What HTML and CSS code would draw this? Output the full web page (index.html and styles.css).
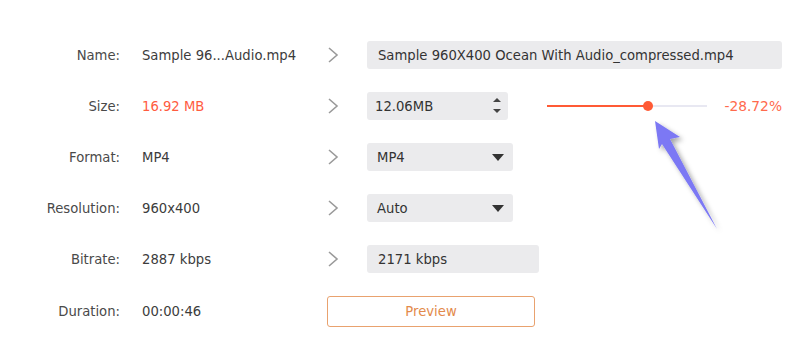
FILE: index.html
```html
<!DOCTYPE html>
<html>
<head>
<meta charset="utf-8">
<link rel="stylesheet" href="styles.css">
</head>
<body>
<div class="panel">
  <div class="label">Name:</div>
  <div class="value">Sample 96...Audio.mp4</div>
  <div class="chev"><svg width="12" height="18" viewBox="0 0 12 18"><polyline points="2,2 10,9 2,16" fill="none" stroke="#9a9a9a" stroke-width="1.6"/></svg></div>
  <div class="field wide">Sample 960X400 Ocean With Audio_compressed.mp4</div>

  <div class="label">Size:</div>
  <div class="value red">16.92 MB</div>
  <div class="chev"><svg width="12" height="18" viewBox="0 0 12 18"><polyline points="2,2 10,9 2,16" fill="none" stroke="#9a9a9a" stroke-width="1.6"/></svg></div>
  <div class="sizecell">
    <div class="field size">12.06MB
      <svg class="spin" width="10" height="20" viewBox="0 0 10 20"><polygon points="1,6 9,6 5,2" fill="#444"/><polygon points="1,13 9,13 5,17" fill="#444"/></svg>
    </div>
    <div class="slider">
      <div class="fill"></div>
      <div class="knob"></div>
    </div>
    <div class="pct">-28.72%</div>
  </div>

  <div class="label">Format:</div>
  <div class="value">MP4</div>
  <div class="chev"><svg width="12" height="18" viewBox="0 0 12 18"><polyline points="2,2 10,9 2,16" fill="none" stroke="#9a9a9a" stroke-width="1.6"/></svg></div>
  <div class="field select">MP4<svg width="12" height="8" viewBox="0 0 12 8"><polygon points="0,1 12,1 6,8" fill="#333"/></svg></div>

  <div class="label">Resolution:</div>
  <div class="value">960x400</div>
  <div class="chev"><svg width="12" height="18" viewBox="0 0 12 18"><polyline points="2,2 10,9 2,16" fill="none" stroke="#9a9a9a" stroke-width="1.6"/></svg></div>
  <div class="field select">Auto<svg width="12" height="8" viewBox="0 0 12 8"><polygon points="0,1 12,1 6,8" fill="#333"/></svg></div>

  <div class="label">Bitrate:</div>
  <div class="value">2887 kbps</div>
  <div class="chev"><svg width="12" height="18" viewBox="0 0 12 18"><polyline points="2,2 10,9 2,16" fill="none" stroke="#9a9a9a" stroke-width="1.6"/></svg></div>
  <div class="field bitrate">2171 kbps</div>

  <div class="label">Duration:</div>
  <div class="value">00:00:46</div>
  <div class="preview">Preview</div>
</div>
<svg class="pointer" width="90" height="130" viewBox="640 110 90 130">
  <defs>
    <filter id="sh" x="-50%" y="-50%" width="200%" height="200%">
      <feDropShadow dx="3" dy="3" stdDeviation="2.5" flood-color="#000" flood-opacity="0.35"/>
    </filter>
  </defs>
  <polygon points="655,121 680,137 670,139 717,229 662,144 659,149" fill="#7b78f4" filter="url(#sh)"/>
</svg>
</body>
</html>
```
FILE: styles.css
```css
html, body {
  margin: 0;
  padding: 0;
  background: #fff;
}
body {
  width: 800px;
  height: 347px;
  position: relative;
  overflow: hidden;
  font-family: "DejaVu Sans", Verdana, sans-serif;
  font-size: 13.2px;
  color: #3c3c3c;
}
.panel {
  display: grid;
  grid-template-columns: 120px 208px 39px 415px;
  row-gap: 23px;
  grid-template-rows: 28px 28px 28px 28px 28px 31px;
  padding-top: 41px;
}
.label {
  display: flex;
  align-items: center;
  justify-content: flex-end;
  color: #4a4a4a;
}
.value {
  display: flex;
  align-items: center;
  padding-left: 22px;
  color: #3c3c3c;
}
.red { color: #ff5c3f; }
.chev {
  display: flex;
  align-items: center;
  margin-left: -1px;
}
.field {
  background: #ebebed;
  border-radius: 3px;
  display: flex;
  align-items: center;
  padding-left: 11px;
  color: #333;
  box-sizing: border-box;
}
.wide { width: 415px; }
.sizecell {
  display: flex;
  align-items: center;
}
.size {
  width: 141px;
  height: 28px;
  justify-content: space-between;
  padding-right: 6px;
  padding-left: 8px;
}
.slider {
  position: relative;
  margin-left: 39px;
  width: 160px;
  height: 2px;
  background: #e8e8f2;
}
.fill {
  width: 101px;
  height: 2px;
  background: #ff5a35;
}
.knob {
  position: absolute;
  left: 96px;
  top: -4px;
  width: 10px;
  height: 10px;
  border-radius: 50%;
  background: #ff5a35;
}
.pct {
  margin-left: auto;
  color: #ff6a4d;
  font-size: 13.8px;
}
.select {
  width: 146px;
  justify-content: space-between;
  padding-right: 9px;
  padding-left: 10px;
}
.bitrate { width: 172px; }
.preview {
  grid-column: 3 / 5;
  width: 208px;
  margin-left: -1px;
  box-sizing: border-box;
  border: 1px solid #e9a26f;
  border-radius: 3px;
  display: flex;
  align-items: center;
  justify-content: center;
  color: #e38a4b;
}
.pointer {
  position: absolute;
  left: 640px;
  top: 110px;
}
```
